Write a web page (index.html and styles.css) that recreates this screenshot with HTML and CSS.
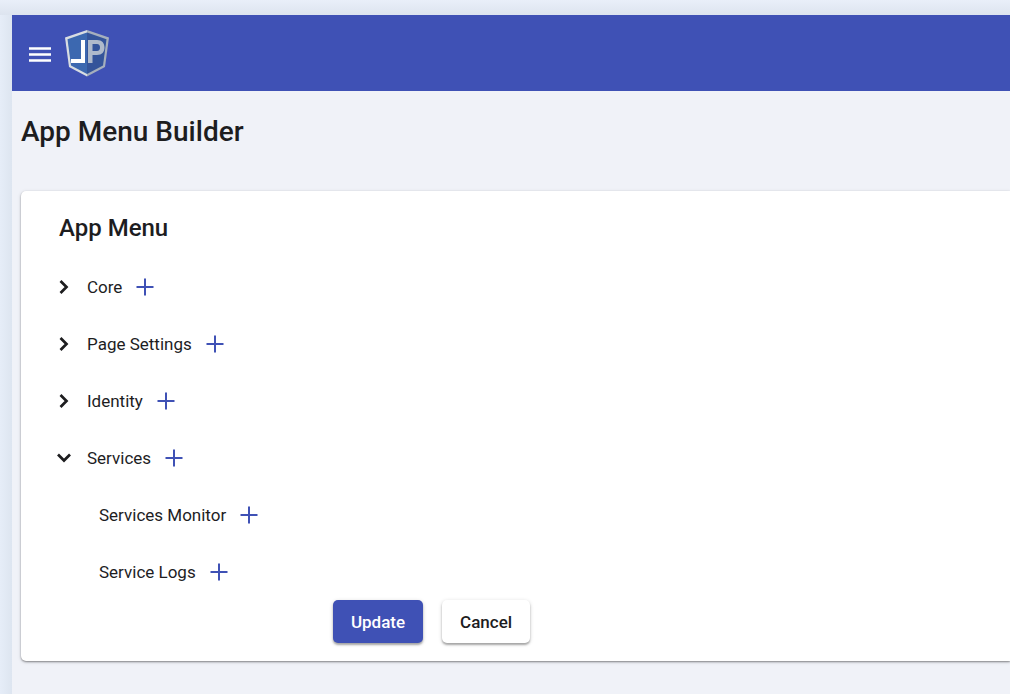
FILE: index.html
```html
<!DOCTYPE html>
<html lang="en">
<head>
<meta charset="utf-8">
<meta name="viewport" content="width=device-width, initial-scale=1">
<title>App Menu Builder</title>
<link rel="stylesheet" href="styles.css">
</head>
<body>
<svg class="sprite" aria-hidden="true">
  <symbol id="plus" viewBox="0 0 18 18"><path d="M9 .5v17M.5 9h17" fill="none" stroke="currentColor" stroke-width="2"/></symbol>
  <symbol id="chevron" viewBox="0 0 16 16"><path d="M4.500 2l6 6-6 6" fill="none" stroke="currentColor" stroke-width="2.700"/></symbol>
</svg>
<div class="app">
  <header class="toolbar">
    <button class="icon-button menu-button" type="button" aria-label="Toggle menu">
      <svg class="menu-icon" viewBox="0 0 24 18"><path d="M1 4.500h22M1 10.500h22M1 16.500h22" stroke="currentColor" stroke-width="2.600"/></svg>
    </button>
    <a class="logo" href="#" aria-label="Home">
      <svg class="logo-icon" viewBox="0 0 44 48">
        <path d="M22 1L44 8.500L40 38 22 47.500z" fill="#a5afbd"/>
        <path d="M22 1L0 8.500 4 38l18 9.500z" fill="#d8dde2"/>
        <path d="M22 3.500L2.500 10.200 6 36.500l16 8.500z" fill="#3c68b0"/>
        <path d="M22 3.500L41.500 10.200 38 36.500 22 45z" fill="#34549a"/>
        <path d="M16 11h4v23H6v-4h10z" fill="#fff"/>
        <path fill-rule="evenodd" d="M23 11h9c5 0 7.500 3 7.500 7.500S37 26 32 26h-4.500v8H23zm4.500 4v7H32c2 0 3-1.200 3-3.500S34 15 32 15z" fill="#afbacb"/>
      </svg>
    </a>
  </header>
  <main class="content">
    <h1 class="page-title">App Menu Builder</h1>
    <section class="card">
      <h2 class="card-title">App Menu</h2>
      <ul class="tree">
        <li>
          <div class="node"><button class="icon-button toggle" type="button" aria-label="Expand Core"><svg class="chevron"><use href="#chevron"/></svg></button><span class="label">Core</span><button class="icon-button add" type="button" aria-label="Add to Core"><svg class="plus"><use href="#plus"/></svg></button></div>
        </li>
        <li>
          <div class="node"><button class="icon-button toggle" type="button" aria-label="Expand Page Settings"><svg class="chevron"><use href="#chevron"/></svg></button><span class="label">Page Settings</span><button class="icon-button add" type="button" aria-label="Add to Page Settings"><svg class="plus"><use href="#plus"/></svg></button></div>
        </li>
        <li>
          <div class="node"><button class="icon-button toggle" type="button" aria-label="Expand Identity"><svg class="chevron"><use href="#chevron"/></svg></button><span class="label">Identity</span><button class="icon-button add" type="button" aria-label="Add to Identity"><svg class="plus"><use href="#plus"/></svg></button></div>
        </li>
        <li>
          <div class="node"><button class="icon-button toggle" type="button" aria-expanded="true" aria-label="Collapse Services"><svg class="chevron chevron-open"><use href="#chevron"/></svg></button><span class="label">Services</span><button class="icon-button add" type="button" aria-label="Add to Services"><svg class="plus"><use href="#plus"/></svg></button></div>
          <ul class="subtree">
            <li class="node"><span class="label">Services Monitor</span><button class="icon-button add" type="button" aria-label="Add to Services Monitor"><svg class="plus"><use href="#plus"/></svg></button></li>
            <li class="node"><span class="label">Service Logs</span><button class="icon-button add" type="button" aria-label="Add to Service Logs"><svg class="plus"><use href="#plus"/></svg></button></li>
          </ul>
        </li>
      </ul>
      <div class="actions">
        <button class="button primary" type="button">Update</button>
        <button class="button" type="button">Cancel</button>
      </div>
    </section>
  </main>
</div>
</body>
</html>
```

FILE: styles.css
```css
* {
  box-sizing: border-box;
}

body {
  margin: 0;
  min-height: 100vh;
  padding: 15px 0 0 12px;
  background:
    linear-gradient(to bottom, #e9eff9, #dde4ef 15px, transparent 15px),
    linear-gradient(to right, #e6edf8, #dde5f0 12px);
  color: #1d1d1f;
  font-family: Roboto, "Liberation Sans", sans-serif;
  font-size: 17px;
}

h1, h2, ul {
  margin: 0;
  padding: 0;
  font-weight: 500;
}

ul {
  list-style: none;
  font-weight: 400;
}

.sprite {
  position: absolute;
  width: 0;
  height: 0;
}

.app {
  min-height: calc(100vh - 15px);
  background: #f0f2f8;
}

.toolbar {
  display: flex;
  align-items: center;
  gap: 13px;
  height: 76px;
  padding: 0 16px;
  background: #3f51b5;
  color: #fff;
}

.icon-button {
  display: flex;
  align-items: center;
  justify-content: center;
  padding: 0;
  border: 0;
  background: none;
  color: inherit;
  cursor: pointer;
}

.menu-icon {
  width: 24px;
  height: 18px;
}

.logo {
  display: flex;
}

.logo-icon {
  width: 44px;
  height: 48px;
}

.content {
  padding: 24px 0 32px 9px;
}

.page-title {
  font-size: 28px;
  line-height: 34px;
}

.card {
  margin-top: 42px;
  padding: 21px 38px 18px;
  border-radius: 5px 0 0 5px;
  background: #fff;
  box-shadow: 0 1px 2px rgba(0, 0, 0, .4), 0 1px 4px rgba(0, 0, 0, .12);
}

.card-title {
  font-size: 24px;
  line-height: 32px;
}

.tree {
  padding-top: 14px;
}

.node {
  display: flex;
  align-items: center;
  height: 57px;
}

.toggle {
  width: 10px;
  margin-right: 18px;
}

.chevron {
  flex: none;
  width: 16px;
  height: 16px;
}

.chevron-open {
  transform: rotate(90deg);
}

.label {
  line-height: 24px;
}

.add {
  margin-left: 14px;
  color: #3f51b5;
}

.plus {
  width: 18px;
  height: 18px;
}

.subtree {
  padding-left: 40px;
}

.actions {
  display: flex;
  justify-content: flex-start;
  gap: 19px;
  padding-left: 30%;
}

.button {
  height: 43px;
  padding: 0 18px;
  border: 0;
  border-radius: 5px;
  background: #fff;
  box-shadow: 0 2px 2px rgba(0, 0, 0, .28), 0 1px 4px rgba(0, 0, 0, .16);
  color: #1d1d1f;
  font: 500 17px/24px Roboto, "Liberation Sans", sans-serif;
  cursor: pointer;
}

.primary {
  background: #3f51b5;
  color: #fff;
}
```
